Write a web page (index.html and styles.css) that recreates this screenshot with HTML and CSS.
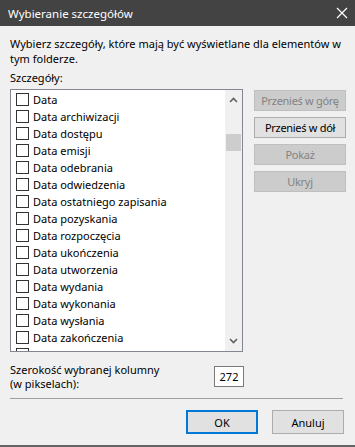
FILE: index.html
```html
<!DOCTYPE html>
<html lang="pl">
<head>
<meta charset="utf-8">
<link rel="stylesheet" href="styles.css">
</head>
<body>
<div class="dialog">
  <div class="titlebar">
    <span class="title">Wybieranie szczegółów</span>
    <svg class="close" width="12" height="12" viewBox="0 0 12 12"><path d="M1 1 L11 11 M11 1 L1 11" stroke="#ffffff" stroke-width="1.2" fill="none"/></svg>
  </div>
  <div class="content">
    <p class="intro">Wybierz szczegóły, które mają być wyświetlane dla elementów w tym folderze.</p>
    <div class="label">Szczegóły:</div>
    <div class="main">
      <div class="listbox">
        <ul class="items">
          <li><span class="cb"></span>Data</li>
          <li><span class="cb"></span>Data archiwizacji</li>
          <li><span class="cb"></span>Data dostępu</li>
          <li><span class="cb"></span>Data emisji</li>
          <li><span class="cb"></span>Data odebrania</li>
          <li><span class="cb"></span>Data odwiedzenia</li>
          <li><span class="cb"></span>Data ostatniego zapisania</li>
          <li><span class="cb"></span>Data pozyskania</li>
          <li><span class="cb"></span>Data rozpoczęcia</li>
          <li><span class="cb"></span>Data ukończenia</li>
          <li><span class="cb"></span>Data utworzenia</li>
          <li><span class="cb"></span>Data wydania</li>
          <li><span class="cb"></span>Data wykonania</li>
          <li><span class="cb"></span>Data wysłania</li>
          <li><span class="cb"></span>Data zakończenia</li>
          <li><span class="cb"></span></li>
        </ul>
        <div class="scrollbar">
          <svg class="arrow" width="9" height="6" viewBox="0 0 9 6"><path d="M1 5 L4.5 1.5 L8 5" stroke="#606060" stroke-width="1.6" fill="none"/></svg>
          <div class="track"><div class="thumb"></div></div>
          <svg class="arrow" width="9" height="6" viewBox="0 0 9 6"><path d="M1 1 L4.5 4.5 L8 1" stroke="#606060" stroke-width="1.6" fill="none"/></svg>
        </div>
      </div>
      <div class="side">
        <button class="btn disabled">Przenieś w górę</button>
        <button class="btn">Przenieś w dół</button>
        <button class="btn disabled">Pokaż</button>
        <button class="btn disabled">Ukryj</button>
      </div>
    </div>
    <div class="width-row">
      <div class="width-label">Szerokość wybranej kolumny<br>(w pikselach):</div>
      <div class="input">272</div>
    </div>
    <div class="sep"></div>
    <div class="actions">
      <button class="btn big default">OK</button>
      <button class="btn big">Anuluj</button>
    </div>
  </div>
  <div class="bottom-edge"></div>
</div>
</body>
</html>
```
FILE: styles.css
```css
* { box-sizing: border-box; }
html, body { margin: 0; padding: 0; }
body {
  width: 355px;
  height: 447px;
  overflow: hidden;
  background: #f0f0f0;
  font-family: "Noto Sans", "Liberation Sans", sans-serif;
  font-size: 11px;
  color: #000;
}
.dialog { width: 355px; height: 447px; display: flex; flex-direction: column; }
.titlebar {
  height: 26px;
  background: #434343;
  color: #fff;
  display: flex;
  align-items: center;
  justify-content: space-between;
  padding: 0 7px 0 8px;
  flex-shrink: 0;
}
.title { font-size: 11.5px; }
.content { padding: 0 9px 0 10px; flex: 1; }
.intro { margin: 10px 0 0 0; line-height: 15px; }
.label { margin-top: 4px; line-height: 15px; }
.main { display: flex; margin-top: 4px; gap: 11px; }
.listbox {
  width: 233px;
  height: 263px;
  border: 1px solid #828790;
  background: #fff;
  display: flex;
  overflow: hidden;
}
.items {
  list-style: none;
  margin: 0;
  padding: 1px 0 0 0;
  flex: 1;
  overflow: hidden;
}
.items li {
  height: 17px;
  display: flex;
  align-items: center;
  padding-left: 5px;
  white-space: nowrap;
}
.cb {
  width: 13px;
  height: 13px;
  border: 1px solid #333;
  background: #fff;
  margin-right: 4px;
  flex-shrink: 0;
}
.scrollbar {
  width: 17px;
  background: #f0f0f0;
  display: flex;
  flex-direction: column;
  align-items: center;
}
.arrow { margin: 7px 0; flex-shrink: 0; }
.track { flex: 1; width: 100%; padding: 0 1px; }
.thumb { margin-top: 24px; height: 17px; background: #cdcdcd; }
.side { display: flex; flex-direction: column; gap: 6px; padding-top: 1px; }
.btn {
  font-family: inherit;
  font-size: 11px;
  letter-spacing: -0.3px;
  width: 92px;
  height: 21px;
  padding: 0;
  border: 1px solid #adadad;
  background: #e1e1e1;
  color: #000;
}
.btn.disabled { background: #cccccc; border-color: #bfbfbf; color: #838383; }
.width-row { display: flex; justify-content: space-between; align-items: flex-start; margin-top: 11px; padding-right: 102px; }
.width-label { line-height: 14px; }
.input {
  width: 30px;
  height: 21px;
  border: 1px solid #7a7a7a;
  background: #fff;
  display: flex;
  align-items: center;
  justify-content: center;
  margin-top: 3px;
}
.sep { height: 1px; background: #a0a0a0; margin-top: 7px; width: 333px; }
.actions { display: flex; justify-content: flex-end; gap: 14px; margin-top: 11px; padding-right: 2px; }
.btn.big { width: 72px; height: 24px; letter-spacing: 0; }
.btn.default { border: 2px solid #0078d7; }
.bottom-edge { height: 2px; background: #646464; margin-top: auto; flex-shrink: 0; }
```
